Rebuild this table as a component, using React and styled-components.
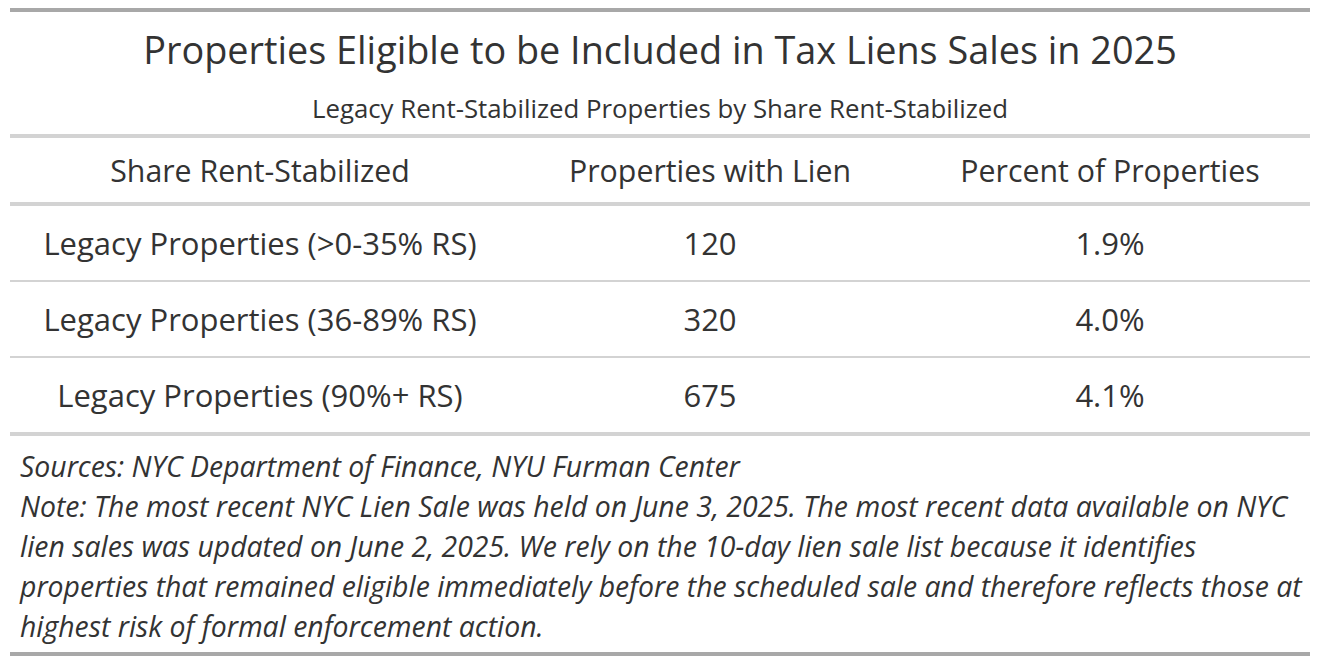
import React from "react";
import styled, { createGlobalStyle } from "styled-components";

const Global = createGlobalStyle`
  html, body { margin: 0; padding: 0; background: #ffffff; }
  body { font-family: "Open Sans", "Noto Sans", sans-serif; color: #333333; }
`;

const Page = styled.div`
  padding: 8px 10px;
`;

const Table = styled.table`
  width: 1300px;
  border-collapse: collapse;
  border-top: 4px solid #a8a8a8;
  border-bottom: 4px solid #a8a8a8;
  table-layout: fixed;
`;

const HeadingCell = styled.th`
  padding: 16px 0 11px;
  text-align: center;
  font-weight: 400;
  border-bottom: 4px solid #d3d3d3;
`;

const Title = styled.div`
  font-size: 37.8px;
  line-height: 44px;
  color: #333333;
`;

const Subtitle = styled.div`
  margin-top: 21px;
  font-size: 25.8px;
  line-height: 30px;
  color: #333333;
`;

const ColLabel = styled.th`
  height: 64px;
  padding: 0;
  font-size: 30.3px;
  font-weight: 400;
  text-align: center;
  vertical-align: middle;
  border-bottom: 4px solid #d3d3d3;
`;

const Row = styled.tr`
  border-top: ${(p) => (p.$first ? "none" : "2px solid #d3d3d3")};
`;

const Cell = styled.td`
  height: 74px;
  padding: 0;
  font-size: 31px;
  line-height: 40px;
  text-align: center;
  vertical-align: middle;
  color: #333333;
`;

const FootCell = styled.td`
  padding: 10px 10px 6px;
  border-top: 4px solid #d3d3d3;
  font-style: italic;
  font-size: 28.4px;
  line-height: 40px;
  text-align: left;
  white-space: nowrap;
  color: #333333;
`;

const rows = [
  ["Legacy Properties (>0-35% RS)", "120", "1.9%"],
  ["Legacy Properties (36-89% RS)", "320", "4.0%"],
  ["Legacy Properties (90%+ RS)", "675", "4.1%"],
];

const footLines = [
  "Sources: NYC Department of Finance, NYU Furman Center",
  "Note: The most recent NYC Lien Sale was held on June 3, 2025. The most recent data available on NYC",
  "lien sales was updated on June 2, 2025. We rely on the 10-day lien sale list because it identifies",
  "properties that remained eligible immediately before the scheduled sale and therefore reflects those at",
  "highest risk of formal enforcement action.",
];

export default function App() {
  return (
    <Page>
      <Global />
      <Table>
        <colgroup>
          <col style={{ width: 500 }} />
          <col style={{ width: 400 }} />
          <col style={{ width: 400 }} />
        </colgroup>
        <thead>
          <tr>
            <HeadingCell colSpan={3}>
              <Title>Properties Eligible to be Included in Tax Liens Sales in 2025</Title>
              <Subtitle>Legacy Rent-Stabilized Properties by Share Rent-Stabilized</Subtitle>
            </HeadingCell>
          </tr>
          <tr>
            <ColLabel>Share Rent-Stabilized</ColLabel>
            <ColLabel>Properties with Lien</ColLabel>
            <ColLabel>Percent of Properties</ColLabel>
          </tr>
        </thead>
        <tbody>
          {rows.map((r, i) => (
            <Row key={i} $first={i === 0}>
              {r.map((c, j) => (
                <Cell key={j}>{c}</Cell>
              ))}
            </Row>
          ))}
        </tbody>
        <tfoot>
          <tr>
            <FootCell colSpan={3}>
              {footLines.map((l, i) => (
                <React.Fragment key={i}>
                  {i > 0 && <br />}
                  {l}
                </React.Fragment>
              ))}
            </FootCell>
          </tr>
        </tfoot>
      </Table>
    </Page>
  );
}
